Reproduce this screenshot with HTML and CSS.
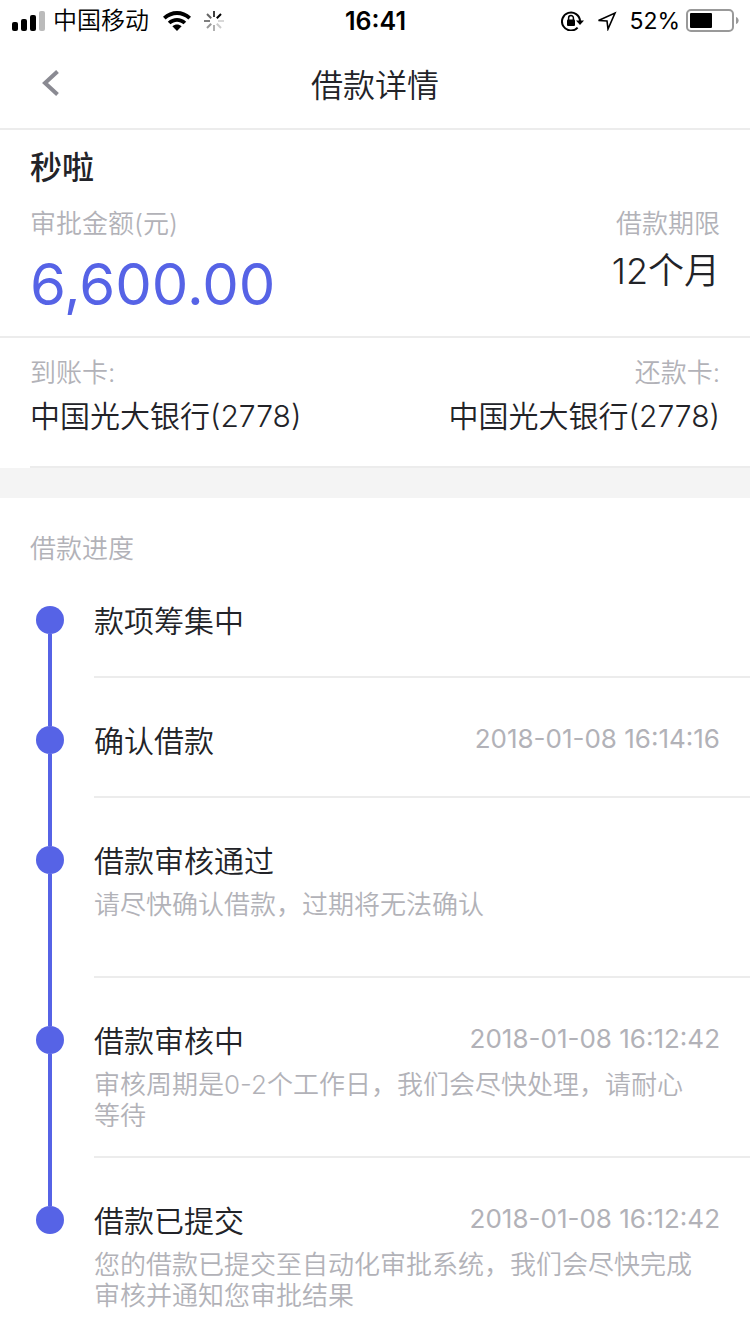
FILE: index.html
```html
<!DOCTYPE html>
<html lang="zh-CN">

<head>
    <meta charset="utf-8">
    <meta name="viewport" content="width=device-width, initial-scale=1.0">
    <title>借款详情</title>
    <link rel="stylesheet" href="styles.css">
</head>

<body>
    <!-- 状态栏 -->
    <div class="status-bar">
        <div class="status-left">
            <svg class="icon-signal" width="34" height="20" viewBox="0 0 34 20">
                <rect x="0" y="11" width="6" height="9" rx="2"/>
                <rect x="9" y="8" width="6" height="12" rx="2"/>
                <rect x="18" y="4" width="6" height="16" rx="2"/>
                <rect x="27" y="0" width="6" height="20" rx="2" fill="#bbb"/>
            </svg>
            <span class="carrier">中国移动</span>
            <svg class="icon-wifi" width="28" height="20" viewBox="0 0 28 20">
                <path d="M0 5.8C8 -1.9 20 -1.9 28 5.8L25.4 8.5C18.8 2.5 9.2 2.5 2.6 8.5Z"/>
                <path d="M4.8 10.7C10.2 5.7 17.8 5.7 23.2 10.7L20.5 13.3C16.7 9.9 11.3 9.9 7.5 13.3Z"/>
                <path d="M9.4 15.2C12.2 12.8 15.8 12.8 18.6 15.2L14 20Z"/>
            </svg>
            <svg class="icon-loading" width="20" height="20" viewBox="0 0 20 20" stroke="#000" stroke-width="2">
                <path d="M10 0V6" opacity=".75"/>
                <path d="M12.8 7.2L17 3" opacity="1"/>
                <path d="M14 10H20" opacity=".15"/>
                <path d="M12.8 12.8L17 17" opacity=".2"/>
                <path d="M10 14V20" opacity=".3"/>
                <path d="M7.2 12.8L3 17" opacity=".4"/>
                <path d="M6 10H0" opacity=".5"/>
                <path d="M7.2 7.2L3 3" opacity=".6"/>
            </svg>
        </div>
        <span class="clock">16:41</span>
        <div class="status-right">
            <svg width="24" height="20" viewBox="0 0 24 20">
                <path d="M16.6 16.6A9 9 0 1 1 19 10" fill="none" stroke="#000" stroke-width="2"/>
                <path d="M15 9.5H23L19 14Z"/>
                <rect x="6" y="8.5" width="8" height="6.5" rx="1"/>
                <path d="M7.6 9V7a2.4 2.4 0 0 1 4.8 0V9" fill="none" stroke="#000" stroke-width="1.5"/>
            </svg>
            <svg class="icon-location" width="20" height="20" viewBox="0 0 20 20">
                <path d="M1.5 9.5L18 2L11 18L10 10Z" fill="none" stroke="#000" stroke-width="1.6"/>
            </svg>
            <span class="battery-text">52%</span>
            <svg width="53" height="24" viewBox="0 0 53 24">
                <rect x="1" y="1" width="46" height="21" rx="4" fill="none" stroke="#999" stroke-width="2"/>
                <rect x="4" y="4" width="22" height="15" rx="1"/>
                <path d="M50 8C53.5 9 53.5 14 50 15Z" fill="#999"/>
            </svg>
        </div>
    </div>

    <!-- 导航栏 -->
    <header class="nav">
        <button class="back-btn" type="button" aria-label="返回">
            <svg width="18" height="26" viewBox="0 0 18 26">
                <path d="M15.5 1.5L3 13L15.5 24.5" fill="none" stroke="#8a8a92" stroke-width="4"/>
            </svg>
        </button>
        <h1 class="nav-title">借款详情</h1>
    </header>

    <!-- 借款信息 -->
    <section class="loan">
        <h2 class="loan-name">秒啦</h2>
        <div class="row">
            <div class="col">
                <div class="label">审批金额(元)</div>
                <div class="amount">6,600.00</div>
            </div>
            <div class="col col-right">
                <div class="label">借款期限</div>
                <div class="term">12个月</div>
            </div>
        </div>
    </section>

    <!-- 银行卡 -->
    <section class="cards">
        <div class="row cards-row">
            <div class="col">
                <div class="label">到账卡:</div>
                <div class="bank">中国光大银行(2778)</div>
            </div>
            <div class="col col-right">
                <div class="label">还款卡:</div>
                <div class="bank">中国光大银行(2778)</div>
            </div>
        </div>
    </section>

    <!-- 借款进度 -->
    <section class="progress">
        <h2 class="progress-title">借款进度</h2>
        <ul class="steps">
            <li class="step">
                <div class="rail"><span class="dot"></span></div>
                <div class="step-body">
                    <div class="step-head"><h3 class="step-name">款项筹集中</h3></div>
                </div>
            </li>
            <li class="step">
                <div class="rail"><span class="dot"></span></div>
                <div class="step-body">
                    <div class="step-head">
                        <h3 class="step-name">确认借款</h3>
                        <time class="step-time">2018-01-08 16:14:16</time>
                    </div>
                </div>
            </li>
            <li class="step">
                <div class="rail"><span class="dot"></span></div>
                <div class="step-body has-desc">
                    <div class="step-head"><h3 class="step-name">借款审核通过</h3></div>
                    <p class="step-desc">请尽快确认借款，过期将无法确认</p>
                </div>
            </li>
            <li class="step">
                <div class="rail"><span class="dot"></span></div>
                <div class="step-body has-desc">
                    <div class="step-head">
                        <h3 class="step-name">借款审核中</h3>
                        <time class="step-time">2018-01-08 16:12:42</time>
                    </div>
                    <p class="step-desc">审核周期是0-2个工作日，我们会尽快处理，请耐心等待</p>
                </div>
            </li>
            <li class="step">
                <div class="rail"><span class="dot"></span></div>
                <div class="step-body has-desc">
                    <div class="step-head">
                        <h3 class="step-name">借款已提交</h3>
                        <time class="step-time">2018-01-08 16:12:42</time>
                    </div>
                    <p class="step-desc">您的借款已提交至自动化审批系统，我们会尽快完成审核并通知您审批结果</p>
                </div>
            </li>
        </ul>
    </section>
</body>

</html>
```
FILE: styles.css
```css
* {
    box-sizing: border-box;
    margin: 0;
    padding: 0;
}

body {
    background-color: #fff;
    color: #222328;
    font-family: Inter, "Noto Sans CJK SC", sans-serif;
    font-size: 30px;
    font-weight: 350;
}

svg {
    display: block;
    flex: none;
}

/* 状态栏 */
.status-bar {
    display: grid;
    grid-template-columns: 1fr auto 1fr;
    align-items: center;
    height: 40px;
    padding: 0 11px 0 12px;
    color: #000;
    font-size: 24px;
    line-height: 40px;
}

.status-left,
.status-right {
    display: flex;
    align-items: center;
}

.status-right {
    justify-content: flex-end;
}

.carrier {
    margin-left: 7px;
    line-height: 42px;
}

.icon-wifi {
    margin-left: 14px;
}

.icon-loading {
    margin-left: 13px;
}

.clock {
    font-size: 25px;
    font-weight: 600;
}

.icon-location {
    margin-left: 12px;
}

.battery-text {
    margin: 0 6px 0 12px;
    font-size: 23px;
    font-weight: 400;
}

/* 导航栏 */
.nav {
    display: grid;
    grid-template-columns: 90px 1fr 90px;
    align-items: center;
    height: 90px;
    border-bottom: 2px solid #ececec;
}

.back-btn {
    justify-self: start;
    padding: 12px 24px 14px 42px;
    background: none;
    border: none;
    cursor: pointer;
}

.nav-title {
    padding-bottom: 2px;
    text-align: center;
    font-size: 32px;
    font-weight: 350;
}

/* 借款信息 */
.loan {
    padding: 17px 30px 10px;
    border-bottom: 2px solid #ececec;
}

.loan-name {
    font-size: 32px;
    font-weight: 500;
    line-height: 42px;
}

.row {
    display: flex;
    justify-content: space-between;
}

.col-right {
    text-align: right;
}

.label {
    color: #b2b2b8;
    font-size: 26px;
    line-height: 36px;
}

.loan .label {
    margin-top: 17px;
}

.amount {
    color: #5663e6;
    font-size: 58px;
    font-weight: 400;
    line-height: 84px;
}

.term {
    font-size: 36px;
    line-height: 58px;
}

/* 银行卡 */
.cards {
    padding-left: 30px;
    border-bottom: 30px solid #f4f4f4;
}

.cards-row {
    padding: 17px 30px 25px 0;
    border-bottom: 2px solid #ececec;
}

.bank {
    font-size: 30px;
    line-height: 50px;
}

/* 借款进度 */
.progress-title {
    padding: 42px 30px 0;
    color: #b2b2b8;
    font-size: 26px;
    font-weight: 350;
    line-height: 18px;
}

.steps {
    list-style: none;
}

.step {
    display: flex;
}

/* 左侧竖线和圆点 */
.rail {
    display: flex;
    flex: none;
    flex-direction: column;
    align-items: center;
    width: 28px;
    margin: 0 30px 0 36px;
}

.rail::before,
.rail::after {
    content: "";
    width: 4px;
    background-color: #5663e6;
}

.rail::before {
    height: 48px;
}

.rail::after {
    flex: 1;
}

.step:first-child .rail::before,
.step:last-child .rail::after {
    background: none;
}

.dot {
    width: 28px;
    height: 28px;
    border-radius: 50%;
    background-color: #5663e6;
}

.step-body {
    flex: 1;
    padding: 45px 30px 37px 0;
    border-bottom: 2px solid #ececec;
}

.has-desc {
    padding-bottom: 25px;
}

.step:last-child .step-body {
    padding-bottom: 23px;
    border-bottom: none;
}

.step-head {
    display: flex;
    justify-content: space-between;
}

.step-name {
    font-size: 30px;
    font-weight: 350;
    line-height: 36px;
}

.step-time {
    color: #b2b2b8;
    font-size: 26px;
    font-weight: 400;
    line-height: 31px;
}

.step-desc {
    min-height: 62px;
    margin-top: 10px;
    padding-right: 16px;
    color: #b2b2b8;
    font-size: 26px;
    line-height: 31px;
}
```
